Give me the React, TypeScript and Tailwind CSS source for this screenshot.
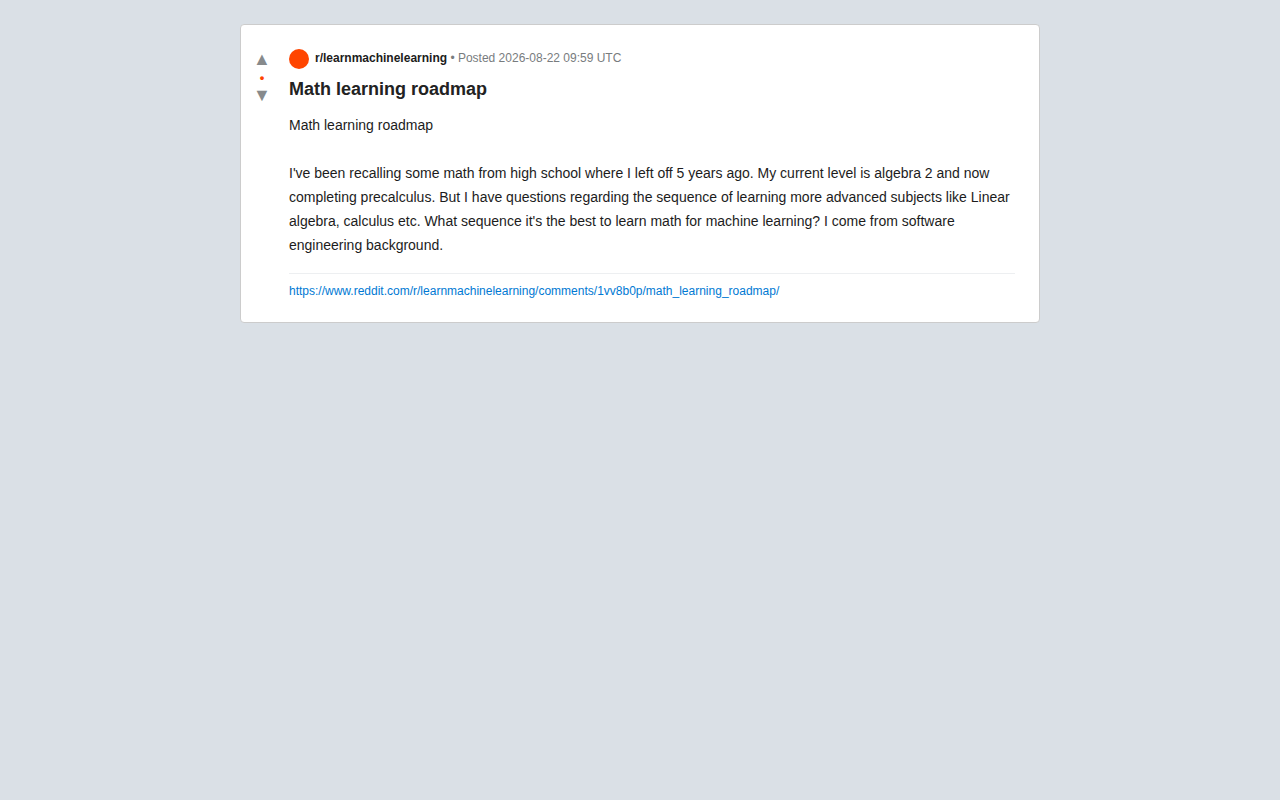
import React from 'react';

interface Post {
    subreddit: string;
    postedAt: string;
    title: string;
    paragraphs: string[];
    url: string;
}

const post: Post = {
    subreddit: 'r/learnmachinelearning',
    postedAt: '2026-08-22 09:59 UTC',
    title: 'Math learning roadmap',
    paragraphs: [
        'Math learning roadmap',
        "I've been recalling some math from high school where I left off 5 years ago. My current level is algebra 2 and now completing precalculus. But I have questions regarding the sequence of learning more advanced subjects like Linear algebra, calculus etc. What sequence it's the best to learn math for machine learning? I come from software engineering background.",
    ],
    url: 'https://www.reddit.com/r/learnmachinelearning/comments/1vv8b0p/math_learning_roadmap/',
};

const VoteColumn: React.FC = () => {
    return (
        <div className="flex w-12 shrink-0 flex-col items-center pr-1.5 text-[#878a8c]">
            <button type="button" aria-label="Upvote" className="text-lg leading-5">
                ▲
            </button>
            <span className="text-[13px] leading-[18px] font-bold text-[#ff4500]">•</span>
            <button type="button" aria-label="Downvote" className="text-lg leading-4">
                ▼
            </button>
        </div>
    );
};

const PostCard: React.FC<{ post: Post }> = ({ post }) => {
    return (
        <article className="mx-auto flex max-w-[800px] rounded border border-[#ccc] bg-white pt-6 pr-6 pb-[22px]">
            <VoteColumn />
            <div className="min-w-0 flex-1">
                <div className="flex gap-1.5 text-xs text-[#787c7e]">
                    <span className="size-5 shrink-0 rounded-full bg-[#ff4500]" />
                    <p className="leading-[18px]">
                        <strong className="font-bold text-[#1c1c1c]">{post.subreddit}</strong>
                        {' • Posted '}
                        {post.postedAt}
                    </p>
                </div>
                <h1 className="mt-2 text-lg leading-6 font-bold text-[#222]">{post.title}</h1>
                <div className="mt-3 space-y-6 text-sm leading-6 text-[#1c1c1c]">
                    {post.paragraphs.map((text) => (
                        <p key={text}>{text}</p>
                    ))}
                </div>
                <div className="mt-4 border-t border-[#edeff1] pt-2 text-xs">
                    <a href={post.url} className="block leading-[18px] break-words text-[#0079d3]">
                        {post.url}
                    </a>
                </div>
            </div>
        </article>
    );
};

export default function App() {
    return (
        <main className="min-h-screen bg-[#dae0e6] p-6 font-['Liberation_Sans',Arial,sans-serif]">
            <PostCard post={post} />
        </main>
    );
}
